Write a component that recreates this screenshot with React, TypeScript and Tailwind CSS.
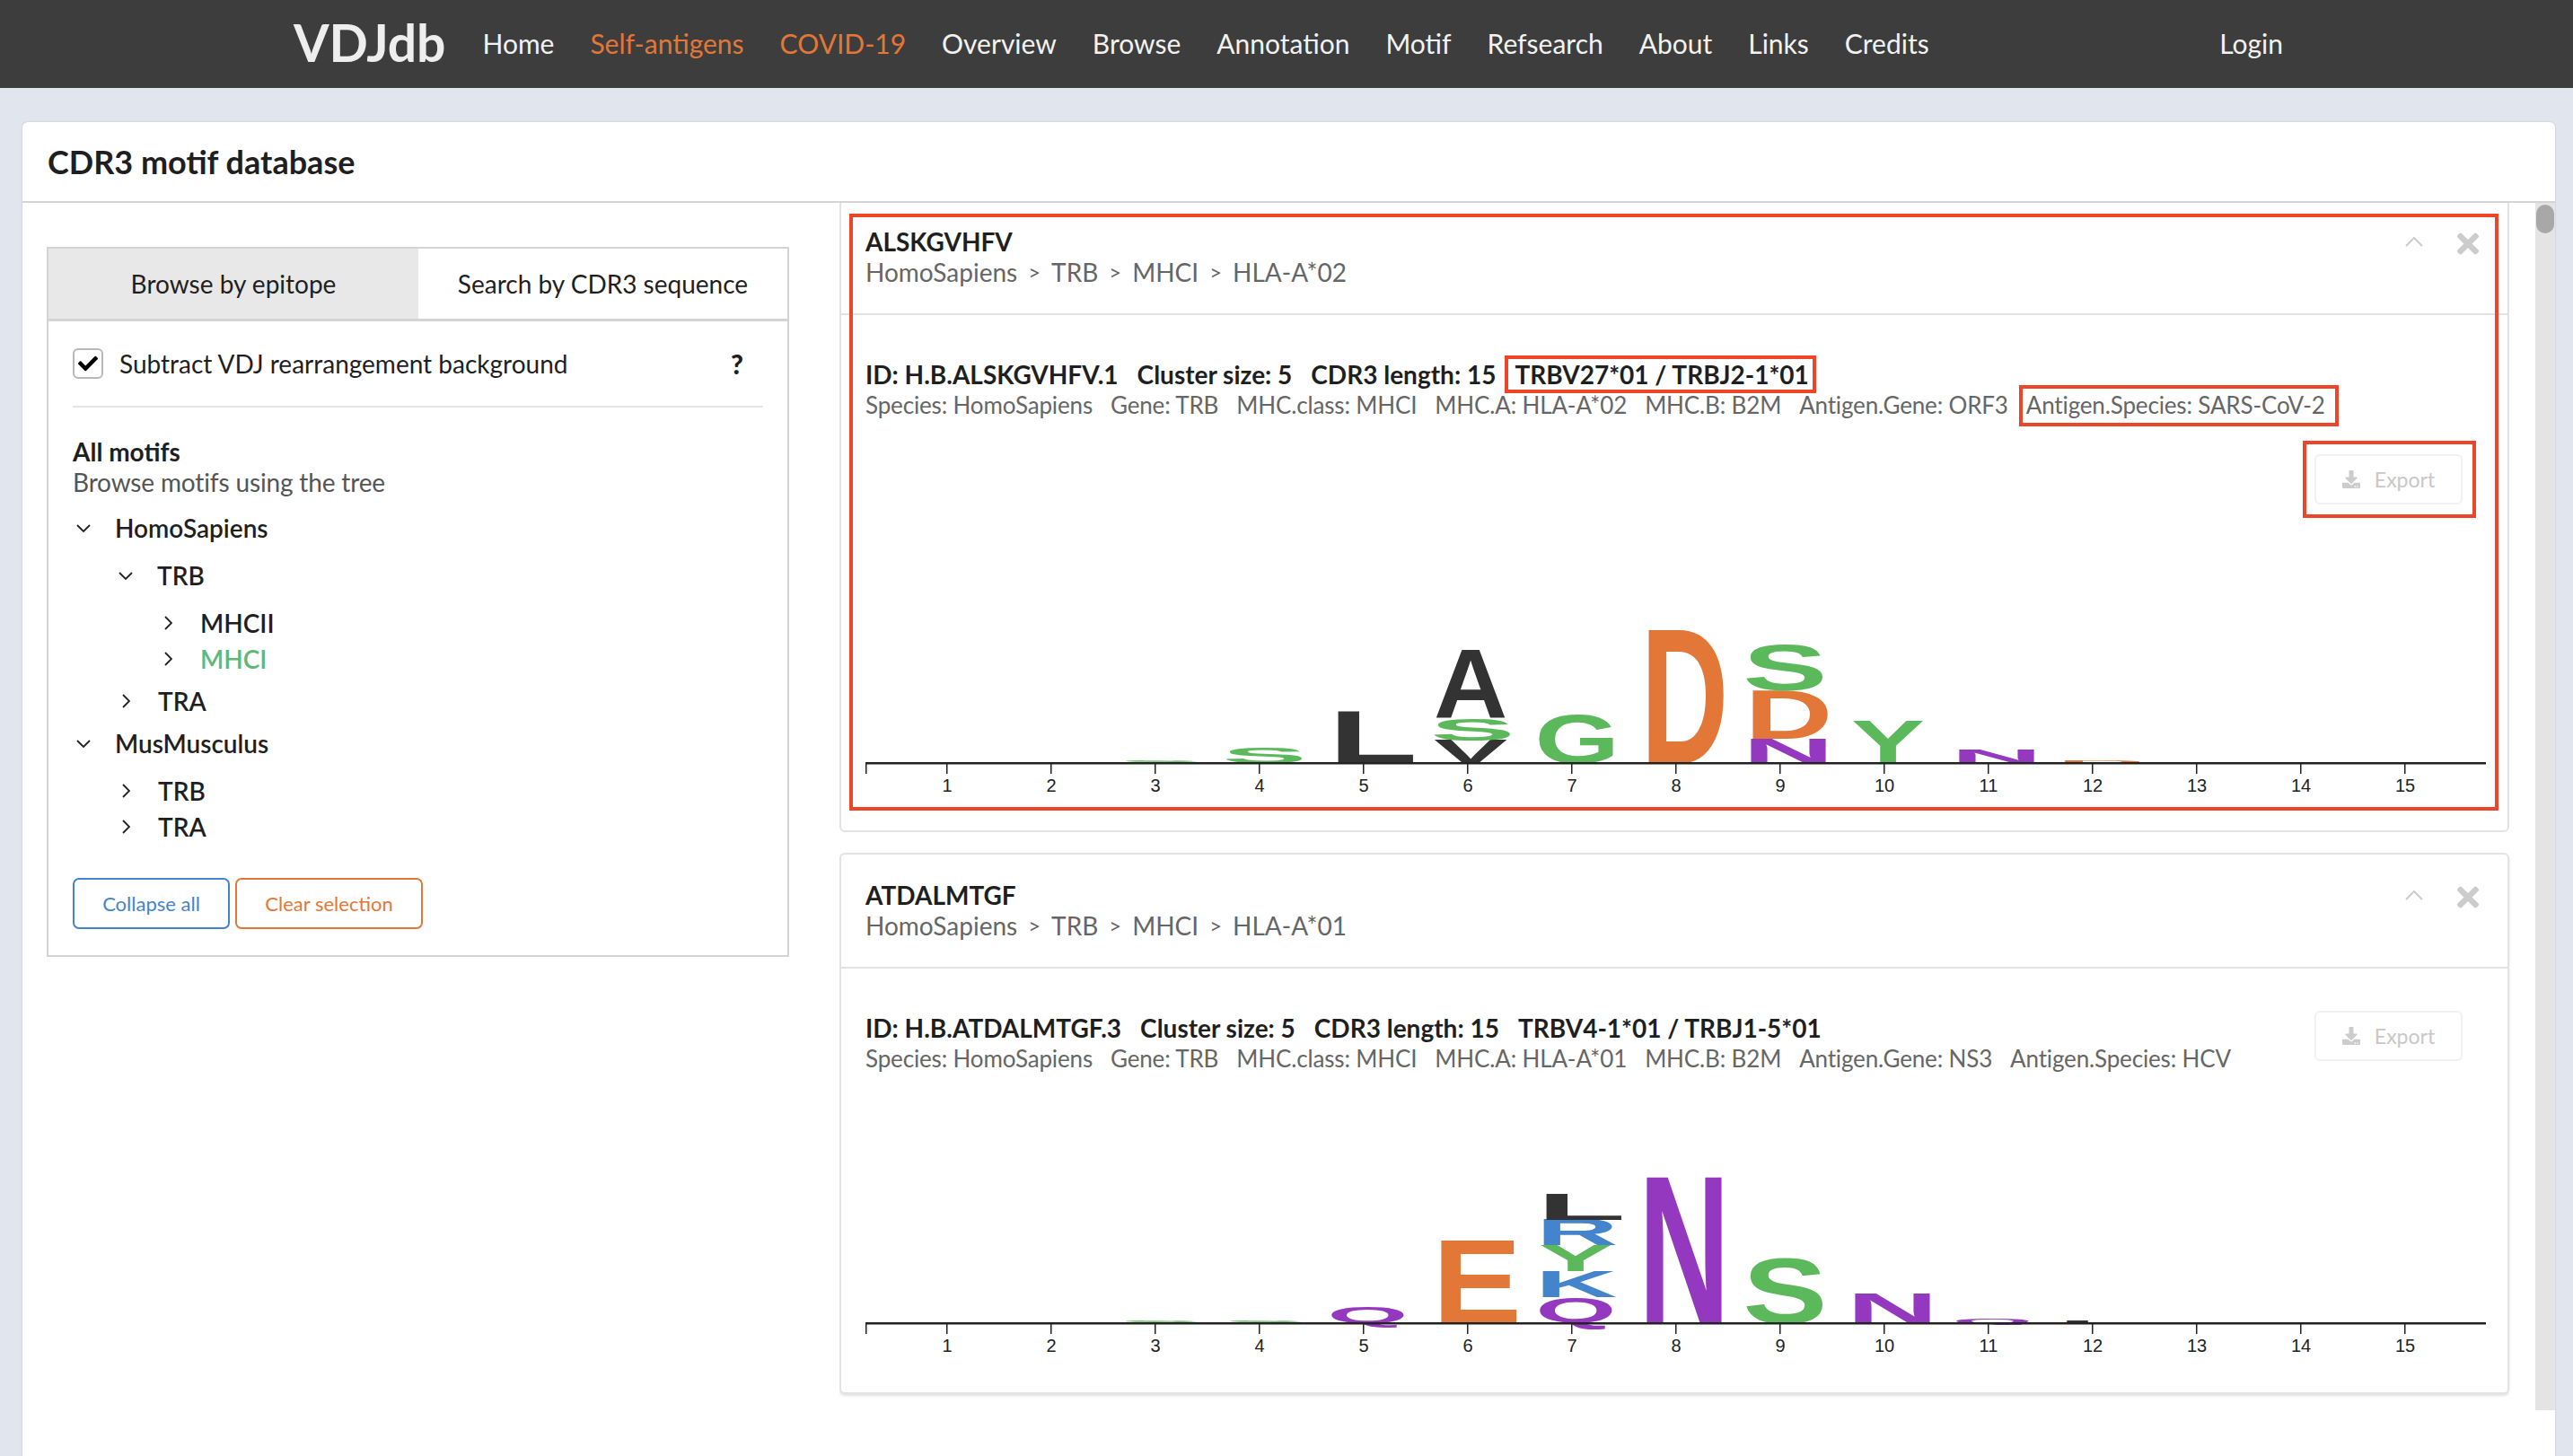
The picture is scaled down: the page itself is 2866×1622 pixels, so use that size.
import { FaDownload, FaTimes, FaCheck } from "react-icons/fa";

const navLinks = [
  { label: "Home" },
  { label: "Self-antigens", accent: true },
  { label: "COVID-19", accent: true },
  { label: "Overview" },
  { label: "Browse" },
  { label: "Annotation" },
  { label: "Motif" },
  { label: "Refsearch" },
  { label: "About" },
  { label: "Links" },
  { label: "Credits" },
];

const treeRows = [
  { label: "HomoSapiens", open: true, row: "pl-[4px] mt-0" },
  { label: "TRB", open: true, row: "pl-[51px] mt-[13px]" },
  { label: "MHCII", open: false, row: "pl-[102px] mt-[13px]" },
  { label: "MHCI", open: false, row: "pl-[102px] mt-0 text-[#5fb878]" },
  { label: "TRA", open: false, row: "pl-[55px] mt-[7px]" },
  { label: "MusMusculus", open: true, row: "pl-[4px] mt-[7px]" },
  { label: "TRB", open: false, row: "pl-[55px] mt-[13px]" },
  { label: "TRA", open: false, row: "pl-[55px] mt-0" },
];

const ORANGE = "#e27737";
const GREEN = "#5bb85b";
const BLACK = "#333333";
const PURPLE = "#9438bf";
const BLUE = "#4484cc";

// ink box of each glyph in em, and how far left of the tick it starts
const glyphs: Record<string, { x0: number; x1: number; y0: number; y1: number; off: number }> = {
  A: { x0: 0, x1: 0.72, y0: 0, y1: 0.688, off: -38 },
  S: { x0: 0.04, x1: 0.62, y0: -0.012, y1: 0.7, off: -36 },
  L: { x0: 0.07, x1: 0.575, y0: 0, y1: 0.688, off: -28 },
  V: { x0: 0, x1: 0.665, y0: 0, y1: 0.688, off: -38 },
  G: { x0: 0.045, x1: 0.72, y0: -0.012, y1: 0.7, off: -36 },
  D: { x0: 0.07, x1: 0.675, y0: 0, y1: 0.688, off: -30 },
  N: { x0: 0.07, x1: 0.65, y0: 0, y1: 0.688, off: -32 },
  Y: { x0: 0, x1: 0.667, y0: 0, y1: 0.688, off: -37 },
  Q: { x0: 0.04, x1: 0.75, y0: -0.05, y1: 0.7, off: -36 },
  E: { x0: 0.07, x1: 0.62, y0: 0, y1: 0.688, off: -29 },
  K: { x0: 0.07, x1: 0.72, y0: 0, y1: 0.688, off: -32 },
  R: { x0: 0.07, x1: 0.72, y0: 0, y1: 0.688, off: -31 },
};

// [letter, colour, position, bottom above axis, height]
type Stack = [string, string, number, number, number];

const logoOne: Stack[] = [
  ["S", GREEN, 3, 0, 3],
  ["S", GREEN, 4, 0, 17],
  ["L", BLACK, 5, 0, 58],
  ["V", BLACK, 6, 0, 26],
  ["S", GREEN, 6, 25, 25],
  ["A", BLACK, 6, 51, 75],
  ["G", GREEN, 7, -1, 55],
  ["D", ORANGE, 8, 0, 148],
  ["N", PURPLE, 9, 0, 27],
  ["D", ORANGE, 9, 27, 54],
  ["S", GREEN, 9, 80, 52],
  ["Y", GREEN, 10, 0, 47],
  ["N", PURPLE, 11, 0, 15],
  ["D", ORANGE, 12, 0, 2],
];

const logoTwo: Stack[] = [
  ["S", GREEN, 3, 0, 2],
  ["S", GREEN, 4, 0, 3],
  ["Q", PURPLE, 5, -1, 20],
  ["E", ORANGE, 6, 0, 92],
  ["Q", PURPLE, 7, -1, 29],
  ["K", BLUE, 7, 29, 29],
  ["Y", GREEN, 7, 58, 29],
  ["R", BLUE, 7, 87, 29],
  ["L", BLACK, 7, 115, 29],
  ["N", PURPLE, 8, 0, 162],
  ["S", GREEN, 9, -1, 74],
  ["N", PURPLE, 10, 0, 33],
  ["Q", PURPLE, 11, 0, 5],
  ["L", BLACK, 12, 0, 2],
  ["Q", PURPLE, 13, 0, 1],
];

const AXIS_Y = 289;
const tickX = (pos: number) => 91 + (pos - 1) * 116;

function SeqLogo({ stacks }: { stacks: Stack[] }) {
  return (
    <svg width="1810" height="340" viewBox="0 0 1810 340" className="block">
      {stacks.map(([letter, color, pos, bottom, height], i) => {
        const g = glyphs[letter];
        const sx = 82 / ((g.x1 - g.x0) * 100);
        const sy = height / ((g.y1 - g.y0) * 100);
        const left = tickX(pos) + g.off - g.x0 * 100 * sx;
        const base = AXIS_Y - bottom + g.y0 * 100 * sy;
        return (
          <text
            key={i}
            transform={`translate(${left} ${base}) scale(${sx} ${sy})`}
            fontFamily="Liberation Sans, Arial, sans-serif"
            fontWeight="700"
            fontSize="100"
            fill={color}
          >
            {letter}
          </text>
        );
      })}
      <rect x="0" y={AXIS_Y - 1} width="1805" height="2.5" fill="#222222" />
      <rect x="0" y={AXIS_Y} width="1.5" height="12" fill="#222222" />
      {Array.from({ length: 15 }, (_, i) => i + 1).map((n) => (
        <g key={n}>
          <rect x={tickX(n) - 1} y={AXIS_Y} width="1.5" height="12" fill="#222222" />
          <text
            x={tickX(n)}
            y={AXIS_Y + 32}
            textAnchor="middle"
            fontFamily="Liberation Sans, Arial, sans-serif"
            fontSize="20"
            fill="#222222"
          >
            {n}
          </text>
        </g>
      ))}
    </svg>
  );
}

function Chevron({ open }: { open: boolean }) {
  return open ? (
    <svg width="16" height="9" viewBox="0 0 16 9" fill="none" stroke="#222" strokeWidth="1.8">
      <path d="M1 1l7 7 7-7" />
    </svg>
  ) : (
    <svg width="9" height="16" viewBox="0 0 9 16" fill="none" stroke="#222" strokeWidth="1.8">
      <path d="M1 1l7 7-7 7" />
    </svg>
  );
}

function Breadcrumb({ items }: { items: string[] }) {
  return (
    <div className="flex items-center h-[35px] text-[28px] text-[#666666]">
      {items.map((item, i) => (
        <span key={item} className="flex items-center">
          {i > 0 && <span className="mx-[12px] text-[24px]">&gt;</span>}
          {item}
        </span>
      ))}
    </div>
  );
}

function ExportButton() {
  return (
    <div className="flex items-center justify-center gap-[16px] w-[165px] h-[56px] border-2 border-[#f1f1f1] rounded-[6px] text-[23px] text-[#c8c8c8] shrink-0">
      <FaDownload className="w-[20px] h-[20px] text-[#cccccc]" />
      Export
    </div>
  );
}

function CardHeader({ title, crumbs }: { title: string; crumbs: string[] }) {
  return (
    <div className="flex justify-between h-[127px] pl-[27px] pr-[32px] pt-[28px] border-b-2 border-[#e3e3e3]">
      <div>
        <div className="h-[33px] leading-[35px] text-[28px] font-bold text-[#1f1f1f]">{title}</div>
        <Breadcrumb items={crumbs} />
      </div>
      <div className="flex items-start gap-[38px] pt-[2px]">
        <svg width="20" height="11" viewBox="0 0 20 11" fill="none" stroke="#cccccc" strokeWidth="2" className="mt-[10px]">
          <path d="M1 10l9-9 9 9" />
        </svg>
        <FaTimes className="w-[24px] h-[35px] text-[#cccccc]" />
      </div>
    </div>
  );
}

function InfoLines({ strong, muted }: { strong: string[]; muted: string[] }) {
  return (
    <div>
      <div className="flex gap-[21px] h-[34px] leading-[34px] text-[28px] font-bold text-[#1f1f1f] whitespace-nowrap">
        {strong.map((s) => (
          <span key={s}>{s}</span>
        ))}
      </div>
      <div className="flex gap-[20px] h-[34px] leading-[34px] text-[26px] tracking-[-0.15px] text-[#666666] whitespace-nowrap">
        {muted.map((s) => (
          <span key={s}>{s}</span>
        ))}
      </div>
    </div>
  );
}

export default function App() {
  return (
    <div className="relative h-[1622px] w-[2866px] overflow-hidden bg-[#e1e5ee] font-['Lato',sans-serif] text-[#1f1f1f]">
      <nav className="flex items-center h-[98px] pb-[2px] pl-[327px] pr-[323px] bg-[#3d3d3d] text-[#f2f2f2] text-[30px]">
        <span className="mr-[41px] text-[57px] font-bold text-[#eeeeee]">VDJdb</span>
        <div className="flex items-center gap-[40px]">
          {navLinks.map((link) => (
            <span key={link.label} className={link.accent ? "text-[#e27737]" : ""}>
              {link.label}
            </span>
          ))}
        </div>
        <span className="ml-auto">Login</span>
      </nav>

      <div className="flex flex-col mt-[38px] ml-[25px] mr-[20px] h-[1500px] bg-white rounded-t-[6px] shadow-[0_0_2px_rgba(0,0,0,0.2)]">
        <div className="flex items-center h-[90px] pl-[28px] border-b-2 border-[#d4d4d5]">
          <h1 className="text-[36px] font-bold">CDR3 motif database</h1>
        </div>

        <div className="flex h-[1345px]">
          <aside className="w-[910px] shrink-0 pl-[27px] pt-[49px]">
            <div className="w-[827px] h-[791px] border-2 border-[#d4d4d5]">
              <div className="flex h-[81px] border-b-[3px] border-[#d4d4d5] text-[28px]">
                <div className="flex items-center justify-center w-[412px] bg-[#e8e8e8]">Browse by epitope</div>
                <div className="flex items-center justify-center flex-1">Search by CDR3 sequence</div>
              </div>

              <div className="px-[27px]">
                <div className="flex items-center h-[96px] border-b-2 border-[#e5e5e5]">
                  <div className="flex items-center justify-center w-[34px] h-[34px] border-2 border-[#b8b8b8] rounded-[6px]">
                    <FaCheck className="w-[22px] h-[22px] text-black" />
                  </div>
                  <span className="ml-[18px] text-[28px]">Subtract VDJ rearrangement background</span>
                  <span className="ml-auto mr-[22px] text-[30px] font-black">?</span>
                </div>

                <div className="mt-[32px] h-[34px] leading-[34px] text-[28px] font-bold">All motifs</div>
                <div className="h-[34px] leading-[34px] text-[28px] tracking-[-0.15px] text-[#555555]">
                  Browse motifs using the tree
                </div>

                <div className="mt-[14px]">
                  {treeRows.map((row, i) => (
                    <div
                      key={i}
                      className={`flex items-center h-[40px] text-[28px] ${row.open ? "gap-[27px]" : "gap-[31px]"} ${row.row}`}
                    >
                      <Chevron open={row.open} />
                      <span className="font-semibold">{row.label}</span>
                    </div>
                  ))}
                </div>

                <div className="flex gap-[6px] mt-[37px]">
                  <button className="w-[175px] h-[57px] border-2 border-[#4484cc] rounded-[7px] text-[22px] text-[#4484cc]">
                    Collapse all
                  </button>
                  <button className="w-[209px] h-[57px] border-2 border-[#e27737] rounded-[7px] text-[22px] text-[#e27737]">
                    Clear selection
                  </button>
                </div>
              </div>
            </div>
          </aside>

          <main className="flex-1 h-[1345px] overflow-hidden pr-[29px]">
            <div className="-mt-[4px] h-[705px] bg-white border-2 border-[#e3e3e3] rounded-[6px]">
              <CardHeader title="ALSKGVHFV" crumbs={["HomoSapiens", "TRB", "MHCI", "HLA-A*02"]} />
              <div className="px-[27px] pt-[49px]">
                <InfoLines
                  strong={["ID: H.B.ALSKGVHFV.1", "Cluster size: 5", "CDR3 length: 15", "TRBV27*01 / TRBJ2-1*01"]}
                  muted={[
                    "Species: HomoSapiens",
                    "Gene: TRB",
                    "MHC.class: MHCI",
                    "MHC.A: HLA-A*02",
                    "MHC.B: B2M",
                    "Antigen.Gene: ORF3",
                    "Antigen.Species: SARS-CoV-2",
                  ]}
                />
                <div className="flex justify-end mt-[38px] pr-[23px]">
                  <ExportButton />
                </div>
                <div className="-mt-[1px]">
                  <SeqLogo stacks={logoOne} />
                </div>
              </div>
            </div>

            <div className="mt-[23px] h-[603px] bg-white border-2 border-[#e3e3e3] rounded-[6px] shadow-[0_2px_3px_rgba(0,0,0,0.12)]">
              <CardHeader title="ATDALMTGF" crumbs={["HomoSapiens", "TRB", "MHCI", "HLA-A*01"]} />
              <div className="px-[27px] pt-[47px]">
                <div className="flex justify-between pr-[23px]">
                  <div className="pt-[2px]">
                    <InfoLines
                      strong={["ID: H.B.ATDALMTGF.3", "Cluster size: 5", "CDR3 length: 15", "TRBV4-1*01 / TRBJ1-5*01"]}
                      muted={[
                        "Species: HomoSapiens",
                        "Gene: TRB",
                        "MHC.class: MHCI",
                        "MHC.A: HLA-A*01",
                        "MHC.B: B2M",
                        "Antigen.Gene: NS3",
                        "Antigen.Species: HCV",
                      ]}
                    />
                  </div>
                  <ExportButton />
                </div>
                <div className="-mt-[11px]">
                  <SeqLogo stacks={logoTwo} />
                </div>
              </div>
            </div>
          </main>

          <div className="w-[22px] h-[1345px] bg-[#e4e4e4] pt-[2px] px-[1px]">
            <div className="h-[32px] rounded-full bg-[#a8a8a8]" />
          </div>
        </div>
      </div>

      {/* red annotation boxes drawn over the page */}
      <div className="absolute left-[946px] top-[238px] w-[1837px] h-[665px] border-4 border-[#ee4528]" />
      <div className="absolute left-[1676px] top-[396px] w-[347px] h-[42px] border-4 border-[#ee4528]" />
      <div className="absolute left-[2249px] top-[429px] w-[356px] h-[46px] border-4 border-[#ee4528]" />
      <div className="absolute left-[2565px] top-[491px] w-[193px] h-[86px] border-4 border-[#ee4528]" />
    </div>
  );
}
